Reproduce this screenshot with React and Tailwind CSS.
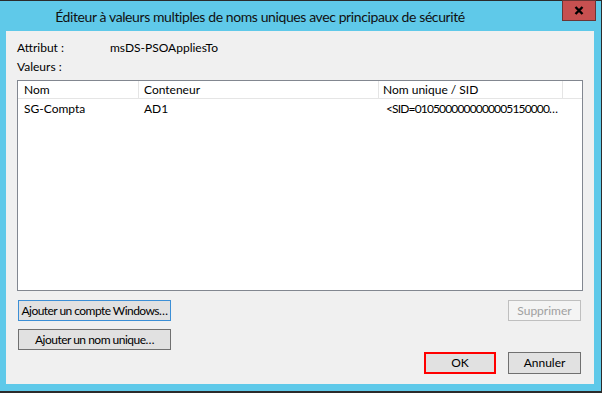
export default function App() {
  const font = { fontFamily: 'Lato, "Liberation Sans", sans-serif' };
  return (
    <div
      className="w-[602px] h-[393px] bg-[#2b2b2b] pt-[1px] pr-[1px] pb-[2px] text-[12px] text-black"
      style={font}
    >
      <div className="relative h-full bg-[#5fc9e9] flex flex-col">
        <div className="h-[30px] flex items-center">
          <div className="w-[520px] text-center text-[14px] tracking-[-0.4px] leading-[20px] text-[#111] pt-[1px]">
            Éditeur à valeurs multiples de noms uniques avec principaux de sécurité
          </div>
        </div>
        <div className="absolute right-[5px] top-[-1px] w-[34px] h-[21px] bg-[#c75050] border border-[#6b3535] flex items-center justify-center">
          <svg width="10" height="9" viewBox="0 0 10 9">
            <path d="M1.5 1 L8.5 8 M8.5 1 L1.5 8" stroke="#000" strokeWidth="2.4" />
          </svg>
        </div>
        <div className="ml-[6px] w-[588px] h-[353px] bg-[#f0f0f0] px-[11px] flex flex-col">
          <div className="mt-[9px] h-[16px] leading-[16px] flex">
            <span className="w-[93px]">Attribut :</span>
            <span>msDS-PSOAppliesTo</span>
          </div>
          <div className="mt-[3px] h-[16px] leading-[16px]">Valeurs :</div>
          <div className="mt-[5px] h-[211px] border border-[#828790] bg-white flex flex-col">
            <div className="h-[18px] flex border-b border-[#e5e5e5] leading-[17px]">
              <div className="w-[121px] border-r border-[#e5e5e5] pl-[6px]">Nom</div>
              <div className="w-[240px] border-r border-[#e5e5e5] pl-[5px]">Conteneur</div>
              <div className="w-[184px] border-r border-[#e5e5e5] pl-[4px]">Nom unique / SID</div>
              <div className="flex-1"></div>
            </div>
            <div className="h-[19px] flex leading-[19px]">
              <div className="w-[121px] pl-[6px]">SG-Compta</div>
              <div className="w-[240px] pl-[5px]">AD1</div>
              <div className="w-[190px] pl-[7px] whitespace-nowrap tracking-[-0.85px]">
                &lt;SID=0105000000000005150000…
              </div>
            </div>
          </div>
          <div className="mt-[9px] flex justify-between pl-[1px] pr-[2px]">
            <div className="w-[153px] h-[21px] border border-[#3c8fd6] bg-[#e1e1e1] flex items-center justify-center whitespace-nowrap tracking-[-0.55px]">
              Ajouter un compte Windows…
            </div>
            <div className="w-[73px] h-[21px] border border-[#bfbfbf] bg-[#f4f4f4] text-[#a0a0a0] flex items-center justify-center">
              Supprimer
            </div>
          </div>
          <div className="mt-[8px] pl-[1px] flex">
            <div className="w-[153px] h-[21px] border border-[#707070] bg-[#e1e1e1] flex items-center justify-center whitespace-nowrap tracking-[-0.5px]">
              Ajouter un nom unique…
            </div>
          </div>
          <div className="mt-[2px] flex justify-end pr-[2px] gap-[12px]">
            <div className="w-[72px] h-[22px] border-2 border-[#ff0000] bg-[#e1e1e1] flex items-center justify-center">
              OK
            </div>
            <div className="w-[73px] h-[22px] border border-[#707070] bg-[#e1e1e1] flex items-center justify-center">
              Annuler
            </div>
          </div>
        </div>
      </div>
    </div>
  );
}
